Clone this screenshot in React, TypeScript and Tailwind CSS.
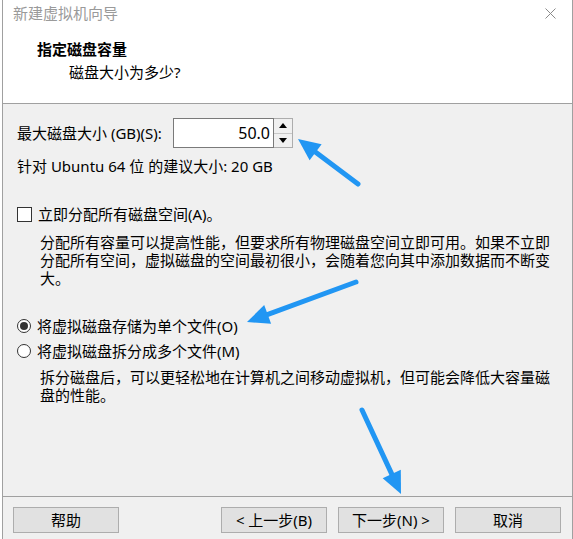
import React from 'react';

// blue annotation arrows drawn over the dialog
const arrows = [
  { x1: 358, y1: 184, x2: 298, y2: 139 },
  { x1: 356, y1: 282, x2: 247, y2: 322 },
  { x1: 362, y1: 410, x2: 401, y2: 494 },
];

const Arrow: React.FC<{ x1: number; y1: number; x2: number; y2: number }> = ({ x1, y1, x2, y2 }) => {
  const dx = x2 - x1;
  const dy = y2 - y1;
  const len = Math.hypot(dx, dy);
  const ux = dx / len;
  const uy = dy / len;
  const head = 22;
  const half = 10;
  const bx = x2 - ux * head;
  const by = y2 - uy * head;
  const pts = `${x2},${y2} ${bx - uy * half},${by + ux * half} ${bx + uy * half},${by - ux * half}`;
  return (
    <g>
      <line x1={x1} y1={y1} x2={bx + ux * 4} y2={by + uy * 4} stroke="#2196f3" strokeWidth={5} strokeLinecap="round" />
      <polygon points={pts} fill="#2196f3" />
    </g>
  );
};

const Radio: React.FC<{ checked?: boolean }> = ({ checked }) => (
  <span className="w-[14px] h-[14px] rounded-full border border-[#333] bg-white flex items-center justify-center shrink-0">
    {checked && <span className="w-[8px] h-[8px] rounded-full bg-[#333]" />}
  </span>
);

const Button: React.FC<{ children: React.ReactNode }> = ({ children }) => (
  <button className="w-[106px] h-[26px] border border-[#adadad] bg-[#e1e1e1] text-[15px] leading-[18px] text-black flex items-center justify-center">
    {children}
  </button>
);

const App: React.FC = () => {
  return (
    <div className="relative w-[573px] h-[539px] bg-white pl-[2px] font-['Noto_Sans','Noto_Sans_CJK_SC',sans-serif] text-black">
      <div className="w-[571px] h-full border-x border-[#a0a0a0] flex flex-col">
        {/* header */}
        <div className="h-[104px] bg-white border-b border-[#a0a0a0] shrink-0">
          <div className="h-[26px] flex items-center justify-between pl-[10px] pr-[16px]">
            <span className="text-[15px] leading-[18px] text-[#9a9a9a]">新建虚拟机向导</span>
            <svg width="11" height="11" viewBox="0 0 11 11">
              <path d="M0.5 0.5 L10.5 10.5 M10.5 0.5 L0.5 10.5" stroke="#8a8a8a" strokeWidth="1" />
            </svg>
          </div>
          <div className="mt-[14px] pl-[34px] text-[15px] leading-[18px] font-bold">指定磁盘容量</div>
          <div className="mt-[5px] pl-[66px] text-[15px] leading-[18px]">磁盘大小为多少?</div>
        </div>

        {/* body */}
        <div className="flex-1 bg-[#f0f0f0] pl-[14px] pt-[14px] text-[15px] leading-[18px]">
          <div className="flex items-center h-[30px]">
            <span className="w-[156px] shrink-0">最大磁盘大小 (GB)(S):</span>
            <div className="flex h-[30px]">
              <div className="w-[101px] h-full bg-white border border-[#7a7a7a] flex items-center justify-end pr-[3px] text-[16px]">
                50.0
              </div>
              <div className="w-[19px] h-full flex flex-col border border-[#adadad] border-l-0 bg-[#f0f0f0]">
                <div className="flex-1 flex items-center justify-center border-b border-[#c8c8c8]">
                  <svg width="8" height="5" viewBox="0 0 8 5"><path d="M0 5 L4 0 L8 5 Z" fill="#000" /></svg>
                </div>
                <div className="flex-1 flex items-center justify-center">
                  <svg width="8" height="5" viewBox="0 0 8 5"><path d="M0 0 L8 0 L4 5 Z" fill="#000" /></svg>
                </div>
              </div>
            </div>
          </div>

          <div className="mt-[9px]">针对 Ubuntu 64 位 的建议大小: 20 GB</div>

          <div className="mt-[30px] flex items-center gap-[6px]">
            <span className="w-[15px] h-[15px] border border-[#333] bg-white shrink-0" />
            <span>立即分配所有磁盘空间(A)。</span>
          </div>
          <p className="mt-[10px] pl-[23px]">
            分配所有容量可以提高性能，但要求所有物理磁盘空间立即可用。如果不立即
            <br />
            分配所有空间，虚拟磁盘的空间最初很小，会随着您向其中添加数据而不断变
            <br />
            大。
          </p>

          <div className="mt-[30px] flex items-center gap-[6px]">
            <Radio checked />
            <span>将虚拟磁盘存储为单个文件(O)</span>
          </div>
          <div className="mt-[7px] flex items-center gap-[6px]">
            <Radio />
            <span>将虚拟磁盘拆分成多个文件(M)</span>
          </div>
          <p className="mt-[8px] pl-[23px]">
            拆分磁盘后，可以更轻松地在计算机之间移动虚拟机，但可能会降低大容量磁
            <br />
            盘的性能。
          </p>
        </div>

        {/* footer */}
        <div className="h-[43px] shrink-0 border-t border-[#a0a0a0] bg-[#f0f0f0] flex items-start pt-[10px] pl-[10px] pr-[11px]">
          <Button>帮助</Button>
          <div className="ml-auto flex gap-[11px]">
            <Button>&lt; 上一步(B)</Button>
            <Button>下一步(N) &gt;</Button>
            <Button>取消</Button>
          </div>
        </div>
      </div>

      <svg className="absolute inset-0 pointer-events-none" width="573" height="539" viewBox="0 0 573 539">
        {arrows.map((a, i) => (
          <Arrow key={i} {...a} />
        ))}
      </svg>
    </div>
  );
};

export default App;
